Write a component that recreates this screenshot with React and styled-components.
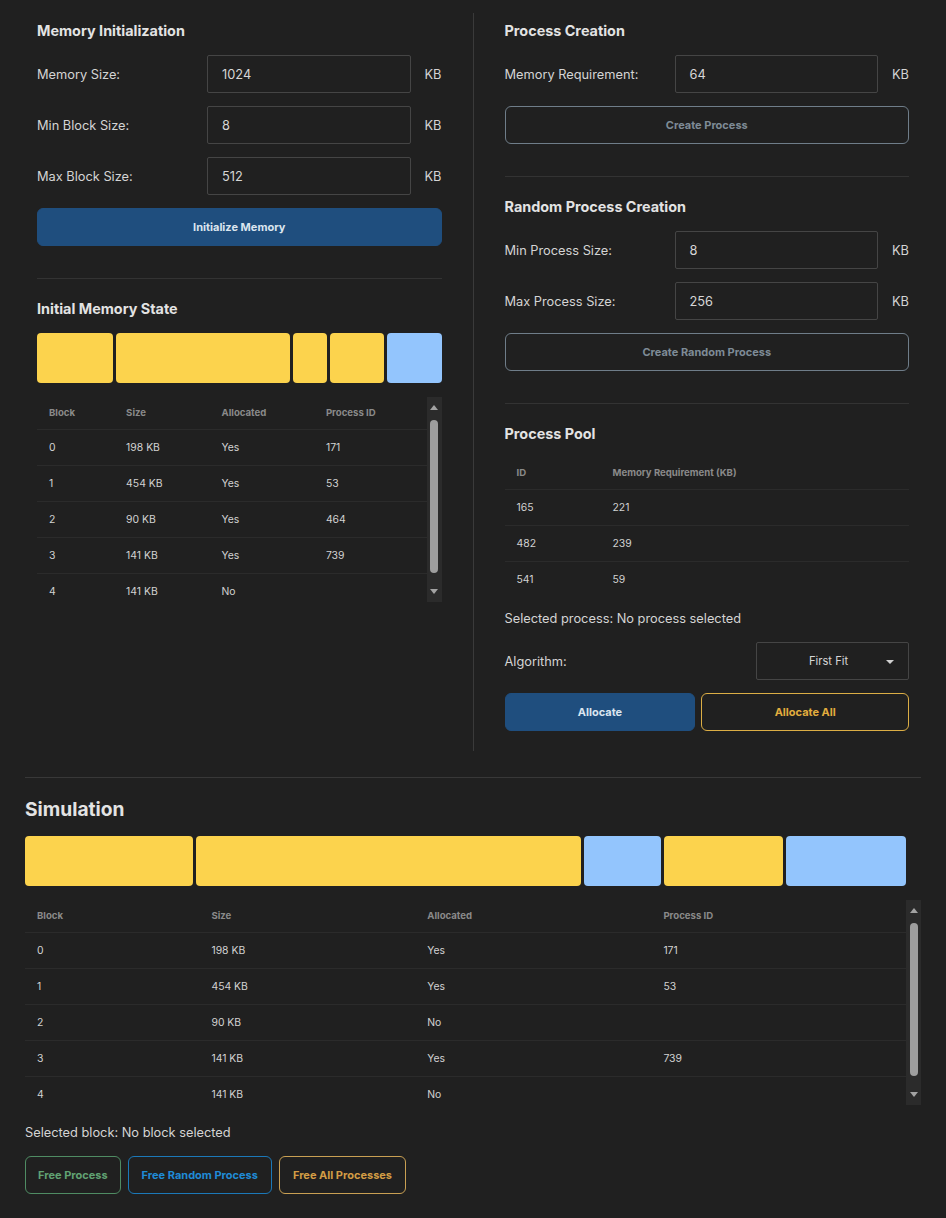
import React from 'react';
import styled, { createGlobalStyle } from 'styled-components';

const GlobalStyle = createGlobalStyle`
  html, body {
    margin: 0;
    padding: 0;
    background: #202020;
  }
  body {
    font-family: Inter, "Noto Sans", "Liberation Sans", sans-serif;
    color: #d6d6d6;
  }
  * { box-sizing: border-box; }
`;

const Page = styled.div`
  width: 946px;
  padding: 0 25px 25px;
  background: #202020;
`;

const TopGrid = styled.div`
  display: grid;
  grid-template-columns: 1fr 1px 1fr;
  column-gap: 31px;
  padding: 13px 12px 0;
`;

const Column = styled.div`
  display: flex;
  flex-direction: column;
  padding: 9px 0 20px;
  min-width: 0;
`;

const Divider = styled.div`
  background: #3a3a3a;
`;

const Title = styled.h3`
  margin: 0 0 ${p => p.$mb || '15px'};
  font-size: 14.4px;
  line-height: 18px;
  font-weight: 700;
  color: #e3e3e3;
`;

const BigTitle = styled.h2`
  margin: 20px 0 15px;
  font-size: 19.2px;
  line-height: 23px;
  font-weight: 700;
  color: #e3e3e3;
`;

const Rule = styled.hr`
  border: none;
  height: 1px;
  background: ${p => p.$strong ? '#383838' : '#333'};
  margin: ${p => p.$m || '32px 0 21px'};
`;

const Fields = styled.div`
  display: flex;
  flex-direction: column;
  gap: 13px;
`;

const FieldRow = styled.div`
  display: grid;
  grid-template-columns: 156px 1fr auto;
  column-gap: 14px;
  align-items: center;
`;

const Label = styled.span`
  font-size: 12.8px;
  color: #d4d4d4;
`;

const Input = styled.div`
  height: 38px;
  border: 1px solid #454545;
  border-radius: 2px;
  padding-left: 14px;
  display: flex;
  align-items: center;
  font-size: 12.8px;
  color: #d6d6d6;
`;

const Unit = styled.span`
  font-size: 12.8px;
  color: #d4d4d4;
`;

const colors = {
  primary: { bg: '#1f4e7e', border: '#1f4e7e', fg: '#dbe5ef' },
  muted: { bg: 'transparent', border: '#6f7d89', fg: '#7e8b96' },
  gold: { bg: 'transparent', border: '#dcae45', fg: '#e2ad3e' },
  green: { bg: 'transparent', border: '#4f8c63', fg: '#60a273' },
  blue: { bg: 'transparent', border: '#1b78b8', fg: '#1f8bd6' },
  amber: { bg: 'transparent', border: '#c9a053', fg: '#d39d45' },
};

const Button = styled.button`
  height: 38px;
  margin-top: ${p => p.$mt || '0'};
  padding: 0 ${p => p.$px || '13px'};
  border-radius: 6px;
  border: 1px solid ${p => colors[p.$kind].border};
  background: ${p => colors[p.$kind].bg};
  color: ${p => colors[p.$kind].fg};
  font-family: inherit;
  font-size: 11px;
  font-weight: 700;
  cursor: pointer;
  flex: ${p => p.$grow ? '1 1 auto' : '0 0 auto'};
  width: ${p => p.$full ? '100%' : 'auto'};
`;

const ButtonRow = styled.div`
  display: flex;
  gap: ${p => p.$gap || '6px'};
  margin-top: ${p => p.$mt || '0'};
`;

const Bar = styled.div`
  display: flex;
  gap: 3px;
  height: 50px;
  margin-right: ${p => p.$mr || '0'};
`;

const Block = styled.div`
  flex: ${p => p.$size} 1 0;
  border-radius: 4px;
  background: ${p => p.$used ? '#fcd34d' : '#93c5fd'};
`;

const ScrollArea = styled.div`
  display: flex;
  height: 205px;
  margin-top: 14px;
`;

const Viewport = styled.div`
  flex: 1;
  min-width: 0;
  overflow: hidden;
`;

const Track = styled.div`
  flex: 0 0 15px;
  background: #2b2b2b;
  display: flex;
  flex-direction: column;
  align-items: center;
  padding: 8px 0;
`;

const Arrow = styled.div`
  width: 0;
  height: 0;
  border-left: 4px solid transparent;
  border-right: 4px solid transparent;
  ${p => p.$down
    ? 'border-top: 5px solid #a3a3a3; margin-top: auto;'
    : 'border-bottom: 5px solid #a3a3a3; margin-bottom: 10px;'}
`;

const Thumb = styled.div`
  width: 8px;
  height: 153px;
  border-radius: 4px;
  background: #9e9e9e;
`;

const Table = styled.table`
  width: 100%;
  border-collapse: collapse;
  table-layout: fixed;
`;

const Col = styled.col`
  width: ${p => p.$w};
`;

const Th = styled.th`
  height: 32px;
  padding: 0 12px;
  text-align: left;
  font-size: 9.6px;
  font-weight: 700;
  color: #8a8a8a;
  border-bottom: 1px solid #2b2b2b;
`;

const Td = styled.td`
  height: 36px;
  padding: 1px 12px 0;
  font-size: 10.4px;
  color: #d2d2d2;
  border-bottom: 1px solid #2b2b2b;

  tr:last-child > & {
    border-bottom: none;
  }
`;

const Note = styled.p`
  margin: ${p => p.$m || '14px 0 0'};
  font-size: 12.8px;
  line-height: 16px;
  color: #d4d4d4;
`;

const AlgoRow = styled.div`
  display: flex;
  justify-content: space-between;
  align-items: center;
  margin-top: 15px;
`;

const Select = styled.div`
  position: relative;
  width: 153px;
  height: 38px;
  border: 1px solid #454545;
  border-radius: 2px;
  display: flex;
  align-items: center;
  justify-content: center;
  padding-right: 8px;
  font-size: 11.2px;
  color: #d6d6d6;

  &::after {
    content: '';
    position: absolute;
    right: 14px;
    top: 17px;
    border-left: 4px solid transparent;
    border-right: 4px solid transparent;
    border-top: 4px solid #d0d0d0;
  }
`;

const blocksInitial = [
  { id: 0, size: 198, alloc: true, pid: 171 },
  { id: 1, size: 454, alloc: true, pid: 53 },
  { id: 2, size: 90, alloc: true, pid: 464 },
  { id: 3, size: 141, alloc: true, pid: 739 },
  { id: 4, size: 141, alloc: false, pid: '' },
];

const blocksSim = [
  { id: 0, size: 198, alloc: true, pid: 171 },
  { id: 1, size: 454, alloc: true, pid: 53 },
  { id: 2, size: 90, alloc: false, pid: '' },
  { id: 3, size: 141, alloc: true, pid: 739 },
  { id: 4, size: 141, alloc: false, pid: '' },
];

const pool = [
  { id: 165, req: 221 },
  { id: 482, req: 239 },
  { id: 541, req: 59 },
];

const blockCols = ['19.8%', '24.5%', '26.8%', 'auto'];

function Field({ label, value }) {
  return (
    <FieldRow>
      <Label>{label}</Label>
      <Input>{value}</Input>
      <Unit>KB</Unit>
    </FieldRow>
  );
}

function MemoryBar({ blocks, mr }) {
  return (
    <Bar $mr={mr}>
      {blocks.map(b => <Block key={b.id} $size={b.size} $used={b.alloc} />)}
    </Bar>
  );
}

function BlockTable({ blocks }) {
  return (
    <ScrollArea>
      <Viewport>
        <Table>
          <colgroup>
            {blockCols.map((w, i) => <Col key={i} $w={w} />)}
          </colgroup>
          <thead>
            <tr>
              <Th>Block</Th>
              <Th>Size</Th>
              <Th>Allocated</Th>
              <Th>Process ID</Th>
            </tr>
          </thead>
          <tbody>
            {blocks.map(b => (
              <tr key={b.id}>
                <Td>{b.id}</Td>
                <Td>{b.size} KB</Td>
                <Td>{b.alloc ? 'Yes' : 'No'}</Td>
                <Td>{b.pid}</Td>
              </tr>
            ))}
          </tbody>
        </Table>
      </Viewport>
      <Track>
        <Arrow />
        <Thumb />
        <Arrow $down />
      </Track>
    </ScrollArea>
  );
}

export default function App() {
  return (
    <Page>
      <GlobalStyle />
      <TopGrid>
        <Column>
          <Title>Memory Initialization</Title>
          <Fields>
            <Field label="Memory Size:" value="1024" />
            <Field label="Min Block Size:" value="8" />
            <Field label="Max Block Size:" value="512" />
          </Fields>
          <Button $kind="primary" $full $mt="13px">Initialize Memory</Button>
          <Rule />
          <Title>Initial Memory State</Title>
          <MemoryBar blocks={blocksInitial} />
          <BlockTable blocks={blocksInitial} />
        </Column>

        <Divider />

        <Column>
          <Title>Process Creation</Title>
          <Fields>
            <Field label="Memory Requirement:" value="64" />
          </Fields>
          <Button $kind="muted" $full $mt="13px">Create Process</Button>
          <Rule />
          <Title>Random Process Creation</Title>
          <Fields>
            <Field label="Min Process Size:" value="8" />
            <Field label="Max Process Size:" value="256" />
          </Fields>
          <Button $kind="muted" $full $mt="13px">Create Random Process</Button>
          <Rule />
          <Title $mb="14px">Process Pool</Title>
          <Table>
            <colgroup>
              <Col $w="96px" />
              <Col $w="auto" />
            </colgroup>
            <thead>
              <tr>
                <Th>ID</Th>
                <Th>Memory Requirement (KB)</Th>
              </tr>
            </thead>
            <tbody>
              {pool.map(p => (
                <tr key={p.id}>
                  <Td>{p.id}</Td>
                  <Td>{p.req}</Td>
                </tr>
              ))}
            </tbody>
          </Table>
          <Note>Selected process: No process selected</Note>
          <AlgoRow>
            <Label>Algorithm:</Label>
            <Select>First Fit</Select>
          </AlgoRow>
          <ButtonRow $mt="13px">
            <Button $kind="primary" $grow>Allocate</Button>
            <Button $kind="gold" $grow>Allocate All</Button>
          </ButtonRow>
        </Column>
      </TopGrid>

      <Rule $strong $m="26px 0 0" />
      <BigTitle>Simulation</BigTitle>
      <MemoryBar blocks={blocksSim} mr="15px" />
      <BlockTable blocks={blocksSim} />
      <Note $m="20px 0 0">Selected block: No block selected</Note>
      <ButtonRow $gap="7px" $mt="15px">
        <Button $kind="green" $px="12px">Free Process</Button>
        <Button $kind="blue">Free Random Process</Button>
        <Button $kind="amber">Free All Processes</Button>
      </ButtonRow>
    </Page>
  );
}
